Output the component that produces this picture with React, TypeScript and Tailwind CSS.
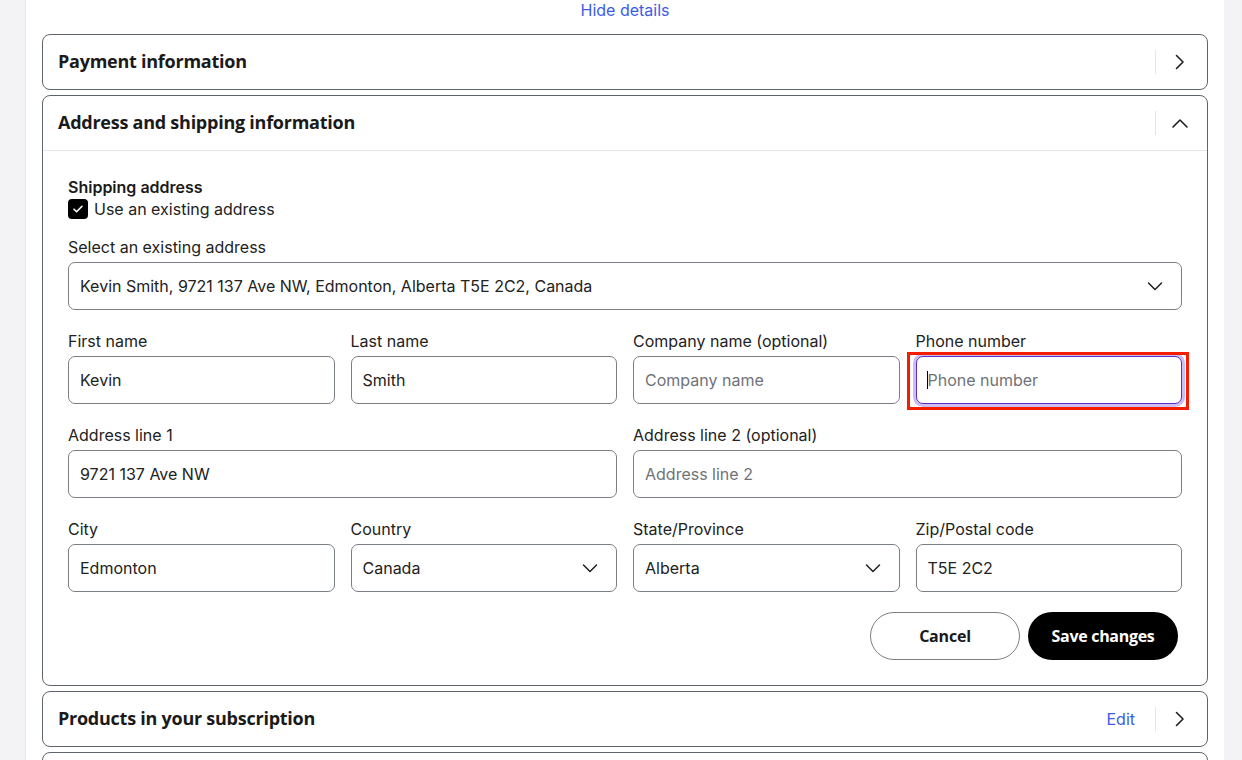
import React from "react";

const body = { fontFamily: "Inter, 'Noto Sans', sans-serif" };
const head = { fontFamily: "'Open Sans', Inter, sans-serif" };

function ChevronRight() {
  return (
    <svg width="24" height="24" viewBox="0 0 24 24" fill="none">
      <path d="M8.5 5.5 15 12l-6.5 6.5" stroke="#1f1f1f" strokeWidth="1.6" strokeLinecap="round" strokeLinejoin="round" />
    </svg>
  );
}
function ChevronUp() {
  return (
    <svg width="24" height="24" viewBox="0 0 24 24" fill="none">
      <path d="M5 16l7-7 7 7" stroke="#1f1f1f" strokeWidth="1.6" strokeLinecap="round" strokeLinejoin="round" />
    </svg>
  );
}
function ChevronDown() {
  return (
    <svg width="20" height="20" viewBox="0 0 20 20" fill="none">
      <path d="M3.5 7l6.5 6.5L16.5 7" stroke="#1f1f1f" strokeWidth="1.5" strokeLinecap="round" strokeLinejoin="round" />
    </svg>
  );
}

function HeaderRight({ edit, up }: { edit?: boolean; up?: boolean }) {
  return (
    <div className="flex items-center">
      {edit && <span className="mr-5 text-[16px] text-[#3d5ce6]" style={body}>Edit</span>}
      <div className="h-6 w-px bg-[#e3e4e6]" />
      <div className="ml-3 flex h-6 w-6 items-center justify-center">{up ? <ChevronUp /> : <ChevronRight />}</div>
    </div>
  );
}

function CardHeader({ title, edit, up }: { title?: string; edit?: boolean; up?: boolean }) {
  return (
    <div className="flex h-[54px] items-center justify-between pl-[15px] pr-[15px]">
      <h2 className="pb-[2px] text-[18px] font-bold tracking-[-0.25px] text-[#1a1a1a]" style={head}>{title}</h2>
      <HeaderRight edit={edit} up={up} />
    </div>
  );
}

function Field({ label, value, placeholder, select, className = "" }: { label: string; value?: string; placeholder?: string; select?: boolean; className?: string }) {
  return (
    <div className={"flex flex-col " + className}>
      <label className="mb-[3px] text-[16px] leading-6 text-[#222]">{label}</label>
      <div className="flex h-12 items-center justify-between rounded-[7px] border border-[#7a7f85] bg-white pl-[11px] pr-4">
        {value ? (
          <span className="text-[16px] text-[#222]">{value}</span>
        ) : (
          <span className="text-[16px] text-[#6f7378]">{placeholder}</span>
        )}
        {select && <ChevronDown />}
      </div>
    </div>
  );
}

export default function App() {
  return (
    <div className="min-h-screen bg-[#f3f3f5]" style={body}>
      <div className="ml-[25px] w-[1199px] min-h-screen border-l border-[#e6e6ea] bg-white px-4">
        <div className="flex h-5 items-center justify-center">
          <span className="text-[16px] text-[#3d5ce6]">Hide details</span>
        </div>
        <div className="mt-[14px] flex flex-col gap-[5px]">
          <div className="rounded-lg border border-[#5f656c]">
            <CardHeader title="Payment information" />
          </div>

          <div className="rounded-lg border border-[#5f656c]">
            <CardHeader title="Address and shipping information" up />
            <div className="border-t border-[#e4e5e7] px-[25px] pt-[26px] pb-[25px]">
              <div className="text-[16px] font-semibold leading-5 text-[#1a1a1a]">Shipping address</div>
              <div className="mt-[2px] flex items-center gap-[6px]">
                <div className="flex h-5 w-5 items-center justify-center rounded-[4px] bg-black">
                  <svg width="14" height="14" viewBox="0 0 14 14" fill="none">
                    <path d="M3 7.2l2.6 2.6L11 4.3" stroke="white" strokeWidth="1.6" strokeLinecap="round" strokeLinejoin="round" />
                  </svg>
                </div>
                <span className="text-[16px] leading-5 text-[#222]">Use an existing address</span>
              </div>

              <div className="mt-4">
                <Field label="Select an existing address" value="Kevin Smith, 9721 137 Ave NW, Edmonton, Alberta T5E 2C2, Canada" select />
              </div>

              <div className="mt-[19px] grid grid-cols-4 gap-x-4 gap-y-[19px]">
                <Field label="First name" value="Kevin" />
                <Field label="Last name" value="Smith" />
                <Field label="Company name (optional)" placeholder="Company name" />
                <div className="flex flex-col">
                  <label className="mb-[3px] text-[16px] leading-6 text-[#222]">Phone number</label>
                  <div className="relative">
                    <div className="flex h-12 items-center rounded-[7px] border-[1.5px] border-[#5a2ec8] bg-white pl-[10px] ring-[3px] ring-[#cdbdf3]">
                      <span className="h-[18px] w-px bg-black" />
                      <span className="text-[16px] text-[#6f7378]">Phone number</span>
                    </div>
                    <div className="pointer-events-none absolute -left-[9px] -right-[7px] -top-[4px] -bottom-[6px] border-[3px] border-[#f51d00]" />
                  </div>
                </div>

                <Field className="col-span-2" label="Address line 1" value="9721 137 Ave NW" />
                <Field className="col-span-2" label="Address line 2 (optional)" placeholder="Address line 2" />

                <Field label="City" value="Edmonton" />
                <Field label="Country" value="Canada" select />
                <Field label="State/Province" value="Alberta" select />
                <Field label="Zip/Postal code" value="T5E 2C2" />
              </div>

              <div className="mt-5 flex justify-end gap-2 pr-1">
                <button className="h-12 w-[150px] rounded-full border border-[#7a7f85] bg-white text-[16px] font-bold tracking-[-0.2px] text-[#1a1a1a]" style={head}>Cancel</button>
                <button className="h-12 w-[150px] rounded-full bg-black text-[16px] font-bold tracking-[-0.3px] text-white" style={head}>Save changes</button>
              </div>
            </div>
          </div>

          <div className="rounded-lg border border-[#5f656c]">
            <CardHeader title="Products in your subscription" edit />
          </div>

          <div className="h-[56px] rounded-lg border border-[#5f656c]" />
        </div>
      </div>
    </div>
  );
}
